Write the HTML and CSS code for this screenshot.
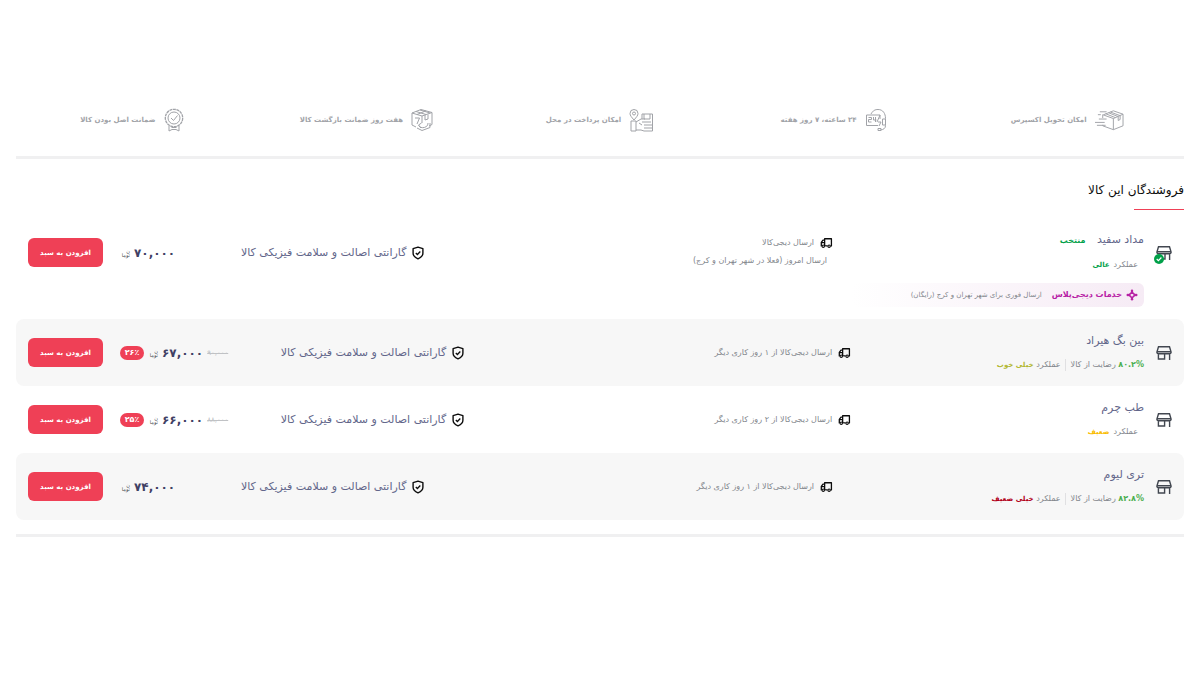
FILE: index.html
```html
<!DOCTYPE html>
<html lang="fa" dir="rtl">
<head>
    <meta charset="UTF-8">
    <meta name="viewport" content="width=device-width, initial-scale=1.0">
    <title>فروشندگان این کالا</title>
    <link rel="stylesheet" href="styles.css">
</head>
<body>
    <!-- Shared icons -->
    <svg class="sprite" width="0" height="0" aria-hidden="true">
        <symbol id="store" viewBox="0 0 16 16">
            <path d="M2.5 1.8h11l1.5 5H1zM1 6.8v.7c0 1 .8 1.2 1.6 1.2h10.8c.8 0 1.6-.2 1.6-1.2v-.7M2.4 8.7V14h6.200V8.700M13.600 8.700V15" fill="none" stroke="currentColor" stroke-width="1.4"/>
        </symbol>
        <symbol id="store-selected" viewBox="0 0 16 16">
            <path d="M2.5 1.8h11l1.5 5H1zM1 6.8v.7c0 1 .8 1.2 1.6 1.2h10.8c.8 0 1.6-.2 1.6-1.2v-.7M9 8.7V14H7M13.6 8.7V15" fill="none" stroke="currentColor" stroke-width="1.4"/>
        </symbol>
        <symbol id="truck" viewBox="0 0 14 12">
            <path d="M5 9.2V1.4h7.3v7.8h-1M8.2 9.2H5.6M5 3H3.2L1.4 5.3v3.9h.4M1.4 5.6H5" fill="none" stroke="currentColor" stroke-width="1.4" stroke-linejoin="round"/>
            <circle cx="3.5" cy="9.4" r="1.3" fill="none" stroke="currentColor" stroke-width="1.2"/>
            <circle cx="9.8" cy="9.4" r="1.3" fill="none" stroke="currentColor" stroke-width="1.2"/>
        </symbol>
        <symbol id="shield" viewBox="0 0 12 14">
            <path d="M6 1.1l4.9 1.6v4.5c0 2.4-1.6 4.2-4.9 5.6-3.3-1.4-4.9-3.2-4.9-5.6V2.7z" fill="none" stroke="currentColor" stroke-width="1.4" stroke-linejoin="round"/>
            <path d="M3.8 7l1.6 1.5 2.9-3" fill="none" stroke="currentColor" stroke-width="1.3"/>
        </symbol>
    </svg>

    <main class="page">
        <ul class="features">
            <li class="feature">
                <svg class="feature-icon wide" viewBox="0 0 30 22">
                    <path d="M9 5.5L19 1.5l10 3.5v12l-10 4-11-4v-1M8 9V5.5l11 4 10-4.5M19 9.5V21M14 3.5l10 4v4l2-1V6.5L16 2.8M11 4.5l10 4M0 13.5h10M2 16.5h9M4 10h8M5 2.5h7M3 5.5h3"/>
                </svg>
                <span>امکان تحویل اکسپرس</span>
            </li>
            <li class="feature">
                <svg class="feature-icon" viewBox="0 0 22 24">
                    <path d="M6 6C8 2.5 10 1.5 13 1.5c5 0 7.5 4 7.5 9v7c0 3-2 4-5 4.5M17.5 11h3v6h-3zM15 11V7H1.5v10.5H13M13 20.5h3v2h-3zM3.5 9.5h3v2h-3v2.5h3M8.5 9v3h3M10.5 9v5M15 7l-3 7M13 14h3l-2 4"/>
                </svg>
                <span>۲۴ ساعته، ۷ روز هفته</span>
            </li>
            <li class="feature">
                <svg class="feature-icon mid" viewBox="0 0 25 24">
                    <path d="M5 12C2.5 9 1 7.5 1 5.5a4 4 0 0 1 8 0C9 7.5 7.5 9 5 12zM2 13h5v10H2zM7 14l5-3h4M7 22h5l3 1h8.5V6H13v5M15 6v5h6V6M13 14h9M15 17h8M15 20h8M13 17l-3-2"/>
                    <circle cx="5" cy="5.5" r="1.5"/>
                </svg>
                <span>امکان پرداخت در محل</span>
            </li>
            <li class="feature">
                <svg class="feature-icon" viewBox="0 0 22 24">
                    <path d="M1 5l9-3.5L21 4.5v12l-3 1.5M1 5v12l4 2M1 5l10 3 10-3.5M5 3.5l10 3M15 2.8L6 6.5M9 2l10 3M4 10h4.5L6 16M11 8v7M14 7v5l3-1V6.5M8 17.5c0 3 9 3.5 9-2.5M10.5 15L7.5 17l2.5 3M6 20l5 2.5 8-3V15"/>
                </svg>
                <span>هفت روز ضمانت بازگشت کالا</span>
            </li>
            <li class="feature">
                <svg class="feature-icon" viewBox="0 0 22 24">
                    <circle cx="11" cy="10" r="8.7" stroke-dasharray="3 .6" stroke-width="1.3"/>
                    <circle cx="11" cy="10" r="6"/>
                    <path d="M8 10l2.5 2.5L14.5 7.5M6 18v5l3-1.5h4l3 1.5v-5M8.5 19.5h5"/>
                </svg>
                <span>ضمانت اصل بودن کالا</span>
            </li>
        </ul>

        <section class="sellers">
            <h2 class="sellers-title">فروشندگان این کالا</h2>

            <article class="seller-row">
                <div class="seller-main">
                    <div class="seller">
                        <span class="store-icon">
                            <svg viewBox="0 0 16 16"><use href="#store-selected"/></svg>
                            <svg class="badge" viewBox="0 0 10 10"><circle cx="5" cy="5" r="5" fill="#00a049"/><path d="M2.7 5l1.7 1.6 3-3.1" fill="none" stroke="#fff" stroke-width="1.2"/></svg>
                        </span>
                        <div>
                            <p class="seller-name">مداد سفید <strong class="chosen">منتخب</strong></p>
                            <p class="seller-meta indent">عملکرد <strong class="great">عالی</strong></p>
                        </div>
                    </div>
                    <div class="shipping">
                        <svg class="truck"><use href="#truck"/></svg>
                        <span>ارسال دیجی‌کالا</span>
                        <p class="shipping-note">ارسال امروز (فعلا در شهر تهران و کرج)</p>
                    </div>
                    <div class="warranty"><svg class="shield"><use href="#shield"/></svg><span>گارانتی اصالت و سلامت فیزیکی کالا</span></div>
                    <div class="price"><b>۷۰,۰۰۰</b><span class="toman"><i>توما</i><i>ن</i></span></div>
                    <button class="add-button" type="button">افزودن به سبد</button>
                </div>
                <div class="plus">
                    <svg class="plus-icon" viewBox="0 0 12 12"><path d="M6 2C6.500 4.300 7.700 5.500 10 6 7.700 6.500 6.500 7.700 6 10 5.500 7.700 4.300 6.500 2 6 4.300 5.500 5.500 4.300 6 2z" fill="#f6ebf5" stroke="currentColor" stroke-width="1.3"/><circle cx="6" cy="1.7" r="1.2"/><circle cx="6" cy="10.3" r="1.2"/><circle cx="1.7" cy="6" r="1.2"/><circle cx="10.3" cy="6" r="1.2"/></svg>
                    <strong>خدمات دیجی‌پلاس</strong>
                    <span>ارسال فوری برای شهر تهران و کرج (رایگان)</span>
                </div>
            </article>

            <article class="seller-row shaded">
                <div class="seller-main">
                    <div class="seller">
                        <span class="store-icon"><svg viewBox="0 0 16 16"><use href="#store"/></svg></span>
                        <div>
                            <p class="seller-name">بین بگ هیراد</p>
                            <p class="seller-meta"><span class="rate"><strong>۸۰.۲%</strong> رضایت از کالا</span><span>عملکرد <strong class="good">خیلی خوب</strong></span></p>
                        </div>
                    </div>
                    <div class="shipping"><svg class="truck"><use href="#truck"/></svg><span>ارسال دیجی‌کالا از ۱ روز کاری دیگر</span></div>
                    <div class="warranty"><svg class="shield"><use href="#shield"/></svg><span>گارانتی اصالت و سلامت فیزیکی کالا</span></div>
                    <div class="price"><del>۹۰,۰۰۰</del><b>۶۷,۰۰۰</b><span class="toman"><i>توما</i><i>ن</i></span><span class="discount">۲۶٪</span></div>
                    <button class="add-button" type="button">افزودن به سبد</button>
                </div>
            </article>

            <article class="seller-row">
                <div class="seller-main">
                    <div class="seller">
                        <span class="store-icon"><svg viewBox="0 0 16 16"><use href="#store"/></svg></span>
                        <div>
                            <p class="seller-name">طب چرم</p>
                            <p class="seller-meta indent">عملکرد <strong class="weak">ضعیف</strong></p>
                        </div>
                    </div>
                    <div class="shipping"><svg class="truck"><use href="#truck"/></svg><span>ارسال دیجی‌کالا از ۲ روز کاری دیگر</span></div>
                    <div class="warranty"><svg class="shield"><use href="#shield"/></svg><span>گارانتی اصالت و سلامت فیزیکی کالا</span></div>
                    <div class="price"><del>۸۸,۰۰۰</del><b>۶۶,۰۰۰</b><span class="toman"><i>توما</i><i>ن</i></span><span class="discount">۲۵٪</span></div>
                    <button class="add-button" type="button">افزودن به سبد</button>
                </div>
            </article>

            <article class="seller-row shaded">
                <div class="seller-main">
                    <div class="seller">
                        <span class="store-icon"><svg viewBox="0 0 16 16"><use href="#store"/></svg></span>
                        <div>
                            <p class="seller-name">تری لیوم</p>
                            <p class="seller-meta"><span class="rate"><strong>۸۲.۸%</strong> رضایت از کالا</span><span>عملکرد <strong class="bad">خیلی ضعیف</strong></span></p>
                        </div>
                    </div>
                    <div class="shipping"><svg class="truck"><use href="#truck"/></svg><span>ارسال دیجی‌کالا از ۱ روز کاری دیگر</span></div>
                    <div class="warranty"><svg class="shield"><use href="#shield"/></svg><span>گارانتی اصالت و سلامت فیزیکی کالا</span></div>
                    <div class="price"><b>۷۴,۰۰۰</b><span class="toman"><i>توما</i><i>ن</i></span></div>
                    <button class="add-button" type="button">افزودن به سبد</button>
                </div>
            </article>
        </section>
    </main>
</body>
</html>
```
FILE: styles.css
```css
* {
    box-sizing: border-box;
}

body {
    margin: 0;
    background-color: #fff;
    color: #81858b;
    font-family: "DejaVu Sans", sans-serif;
    font-size: 8px;
    line-height: 16px;
}

p, h2, ul {
    margin: 0;
    padding: 0;
}

.sprite {
    position: absolute;
}

.page {
    padding: 84px 16px;
}

/* Features */
.features {
    display: grid;
    grid-template-columns: repeat(5, 1fr);
    padding: 24px 0;
    list-style: none;
    border-bottom: 3px solid #f0f0f1;
}

.feature {
    display: flex;
    align-items: center;
    justify-content: center;
    gap: 8px;
    color: #a1a3a8;
    font-size: 7px;
    font-weight: bold;
    white-space: nowrap;
}

.feature-icon {
    width: 22px;
    height: 24px;
    flex: none;
    fill: none;
    stroke: #a1a3a8;
    stroke-width: 1;
}

.feature-icon.wide {
    width: 29px;
}

.feature-icon.mid {
    width: 25px;
}

/* Sellers */
.sellers {
    padding: 20px 0 14px;
    border-bottom: 3px solid #f0f0f1;
}

.sellers-title {
    margin-bottom: 9px;
    color: #0c0c0c;
    font-size: 12px;
    font-weight: normal;
    line-height: 22px;
}

.sellers-title::after {
    content: "";
    display: block;
    width: 50px;
    height: 1px;
    margin-top: 8px;
    background-color: #ef4056;
}

.seller-row {
    padding: 0 12px;
    border-radius: 8px;
}

.seller-row.shaded {
    background-color: #f7f7f7;
}

.seller-main {
    display: grid;
    grid-template-columns: 34fr 41fr 25fr auto 92px;
    align-items: center;
    min-height: 67px;
    white-space: nowrap;
}

.seller-main > * {
    min-width: 0;
}

.seller {
    display: flex;
    align-items: center;
    gap: 12px;
}

.store-icon {
    position: relative;
    flex: none;
    color: #424750;
}

.store-icon svg {
    display: block;
    width: 16px;
    height: 16px;
}

.store-icon .badge {
    position: absolute;
    right: 8px;
    bottom: -3px;
    width: 10px;
    height: 10px;
}

.seller-name {
    color: #62668a;
    font-size: 11px;
    line-height: 24px;
}

.seller-meta {
    display: flex;
    gap: 4px;
    line-height: 24px;
}

.seller-meta.indent {
    padding-right: 6px;
}

.chosen {
    margin-right: 8px;
    font-size: 8px;
}

.chosen,
.great {
    color: #00a049;
}

.great,
.good,
.weak,
.bad {
    font-size: 7px;
}

.good {
    color: #b2b833;
}

.weak {
    color: #f9bc00;
}

.bad {
    color: #b2001a;
}

.rate {
    padding-left: 6px;
    background: linear-gradient(#e0e0e2, #e0e0e2) left center / 1px 12px no-repeat;
}

.rate strong {
    color: #4caf50;
}

.shipping,
.warranty {
    display: flex;
    flex-wrap: wrap;
    align-items: center;
    gap: 0 6px;
}

.warranty {
    flex-wrap: nowrap;
    color: #62668a;
    font-size: 11px;
}

.truck {
    width: 13px;
    height: 12px;
    color: #0c0c0c;
}

.shield {
    width: 12px;
    height: 14px;
    flex: none;
    color: #0c0c0c;
}

.shipping-note {
    width: 100%;
    padding-right: 6px;
    line-height: 20px;
}

.price {
    display: flex;
    align-items: center;
    gap: 4px;
}

.price b {
    color: #3f4064;
    font-size: 12px;
}

.price del {
    color: #c0c2c5;
    font-size: 7px;
}

.toman {
    display: flex;
    flex-direction: column-reverse;
    width: 10px;
    color: #424750;
    font-size: 5px;
    line-height: 4px;
}

.toman i {
    font-style: normal;
}

.discount {
    width: 24px;
    border-radius: 8px;
    background-color: #ef4056;
    color: #fff;
    font-weight: bold;
    line-height: 14px;
    text-align: center;
}

.add-button {
    width: 75px;
    height: 29px;
    padding: 0;
    justify-self: end;
    border: none;
    border-radius: 6px;
    background-color: #ef4056;
    color: #fff;
    font-family: inherit;
    font-size: 7px;
    font-weight: bold;
    cursor: pointer;
}

.plus {
    display: flex;
    align-items: center;
    width: fit-content;
    height: 24px;
    margin: -3px 28px 12px 0;
    padding: 0 6px 0 60px;
    border-radius: 6px;
    background: linear-gradient(to left, #f6ebf5, #fff);
    font-size: 7px;
}

.plus-icon {
    width: 12px;
    height: 12px;
    margin-left: 4px;
    color: #b721a5;
    fill: #b721a5;
}

.plus strong {
    margin-left: 10px;
    color: #b721a5;
    font-size: 8px;
}
```
